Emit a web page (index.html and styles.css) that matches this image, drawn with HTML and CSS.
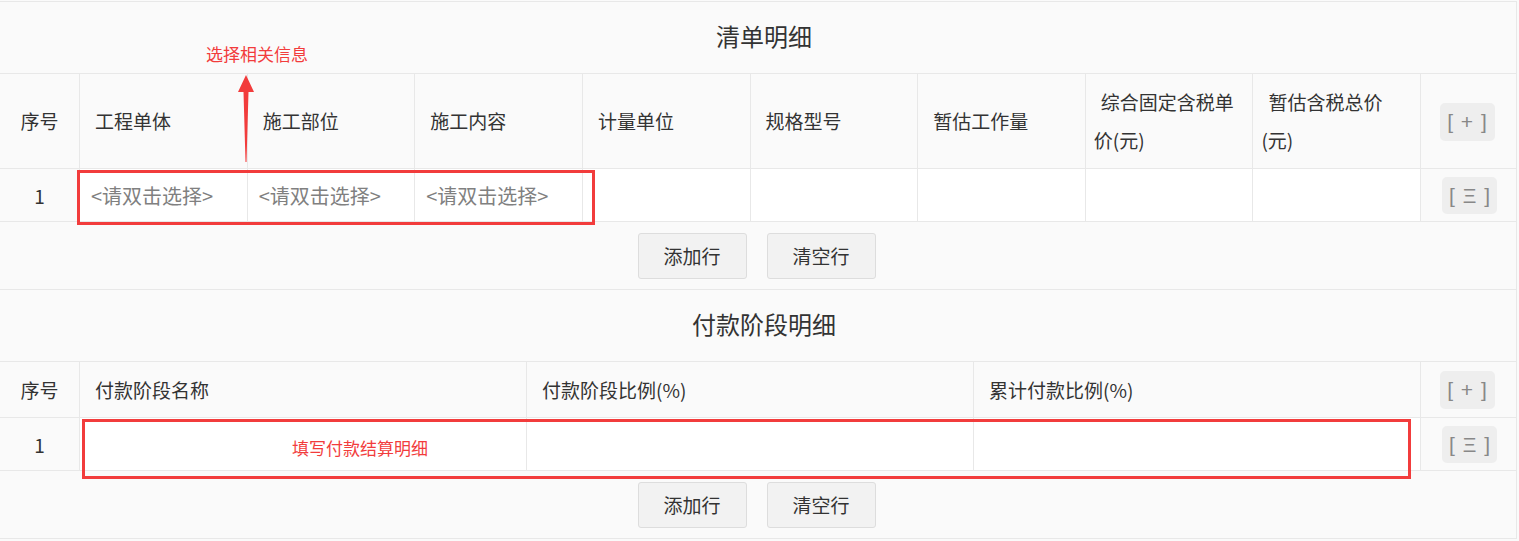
FILE: index.html
```html
<!DOCTYPE html>
<html>
<head>
    <meta charset="UTF-8">
    <title>清单明细</title>
    <link rel="stylesheet" href="styles.css">
</head>
<body>
    <div class="form">

        <!-- 清单明细 -->
        <div class="section">
            <div class="section-title">清单明细</div>
            <table class="grid">
                <colgroup>
                    <col class="col-no">
                    <col><col><col><col><col><col><col><col>
                    <col class="col-act">
                </colgroup>
                <tr class="head tall">
                    <td class="no">序号</td>
                    <td>工程单体</td>
                    <td>施工部位</td>
                    <td>施工内容</td>
                    <td>计量单位</td>
                    <td>规格型号</td>
                    <td>暂估工作量</td>
                    <td>综合固定含税单价(元)</td>
                    <td>暂估含税总价(元)</td>
                    <td class="act"><span class="op">[ + ]</span></td>
                </tr>
                <tr class="row">
                    <td class="no">1</td>
                    <td class="pick">&lt;请双击选择&gt;</td>
                    <td class="pick">&lt;请双击选择&gt;</td>
                    <td class="pick">&lt;请双击选择&gt;</td>
                    <td></td>
                    <td></td>
                    <td></td>
                    <td></td>
                    <td></td>
                    <td class="act"><span class="op menu">[ Ξ ]</span></td>
                </tr>
            </table>
            <div class="section-foot">
                <button>添加行</button>
                <button>清空行</button>
            </div>
        </div>

        <!-- 付款阶段明细 -->
        <div class="section">
            <div class="section-title">付款阶段明细</div>
            <table class="grid">
                <colgroup>
                    <col class="col-no">
                    <col><col><col>
                    <col class="col-act">
                </colgroup>
                <tr class="head">
                    <td class="no">序号</td>
                    <td>付款阶段名称</td>
                    <td>付款阶段比例(%)</td>
                    <td>累计付款比例(%)</td>
                    <td class="act"><span class="op">[ + ]</span></td>
                </tr>
                <tr class="row">
                    <td class="no">1</td>
                    <td></td>
                    <td></td>
                    <td></td>
                    <td class="act"><span class="op menu">[ Ξ ]</span></td>
                </tr>
            </table>
            <div class="section-foot">
                <button>添加行</button>
                <button>清空行</button>
            </div>
        </div>

        <!-- 标注 -->
        <div class="note note-pick">选择相关信息</div>
        <svg class="arrow" width="18" height="88" viewBox="0 0 18 88">
            <polygon points="9,0 17,17 11.5,17 9.5,87 8.5,87 6.5,17 1,17" fill="#f23c3c"/>
        </svg>
        <div class="mark mark-pick"></div>
        <div class="mark mark-pay"></div>
        <div class="note note-pay">填写付款结算明细</div>
    </div>
</body>
</html>
```

FILE: styles.css
```css
body {
    margin: 0;
    padding-top: 1px;
    background-color: #fafafa;
    font-family: "Noto Sans CJK SC", "Noto Sans", sans-serif;
    color: #333;
}

.form {
    position: relative;
    width: 1517px;
    box-sizing: border-box;
    border-top: 1px solid #e8e8e8;
    border-right: 1px solid #e8e8e8;
}

.section-title {
    height: 72px;
    box-sizing: border-box;
    border-bottom: 1px solid #e8e8e8;
    padding-left: 12px;
    font-size: 24px;
    line-height: 68px;
    text-align: center;
}

.grid {
    width: 100%;
    table-layout: fixed;
    border-collapse: separate;
    border-spacing: 0;
    font-size: 19px;
}

.col-no { width: 80px; }
.col-act { width: 95px; }

.grid td {
    box-sizing: border-box;
    border-right: 1px solid #e8e8e8;
    border-bottom: 1px solid #e8e8e8;
    padding: 0 10px 0 8px;
    text-indent: 7px;
    vertical-align: middle;
}

.grid td:last-child {
    border-right: none;
}

.head td {
    height: 56px;
    line-height: 38px;
    background-color: #fafafa;
}

.head.tall td {
    height: 95px;
}

.row td {
    height: 53px;
    background-color: #fff;
}

.grid td.no,
.grid td.act {
    text-align: center;
    text-indent: 0;
    padding: 0;
    background-color: #fafafa;
}

.grid td.pick {
    color: #808080;
    white-space: nowrap;
    padding-left: 11px;
    text-indent: 0;
    font-size: 20px;
}

.op {
    display: inline-block;
    width: 55px;
    height: 38px;
    margin-right: 3px;
    line-height: 38px;
    border-radius: 5px;
    background-color: #eee;
    color: #888;
    font-family: "Liberation Sans", sans-serif;
    font-size: 21px;
    word-spacing: 2px;
}

.op.menu {
    margin-right: 0;
    margin-left: 2px;
    height: 37px;
    line-height: 37px;
}

.section-foot {
    height: 68px;
    box-sizing: border-box;
    border-bottom: 1px solid #e8e8e8;
    display: flex;
    justify-content: center;
    align-items: center;
    gap: 20px;
    padding-right: 3px;
}

button {
    width: 109px;
    height: 46px;
    background-color: #f2f2f2;
    border: 1px solid #ddd;
    border-radius: 3px;
    color: #333;
    font-family: "Noto Sans CJK SC", sans-serif;
    font-size: 19px;
    padding: 0;
    cursor: pointer;
}

/* annotations */
.note {
    position: absolute;
    color: #f23c3c;
    font-size: 17px;
    line-height: 24px;
    white-space: nowrap;
}

.note-pick { left: 206px; top: 40px; }
.note-pay { left: 292px; top: 434px; }

.arrow {
    position: absolute;
    left: 237px;
    top: 73px;
}

.mark {
    position: absolute;
    border: 3px solid #f23c3c;
    box-sizing: border-box;
}

.mark-pick { left: 77px; top: 168px; width: 518px; height: 55px; }
.mark-pay { left: 82px; top: 417px; width: 1329px; height: 60px; }
```
